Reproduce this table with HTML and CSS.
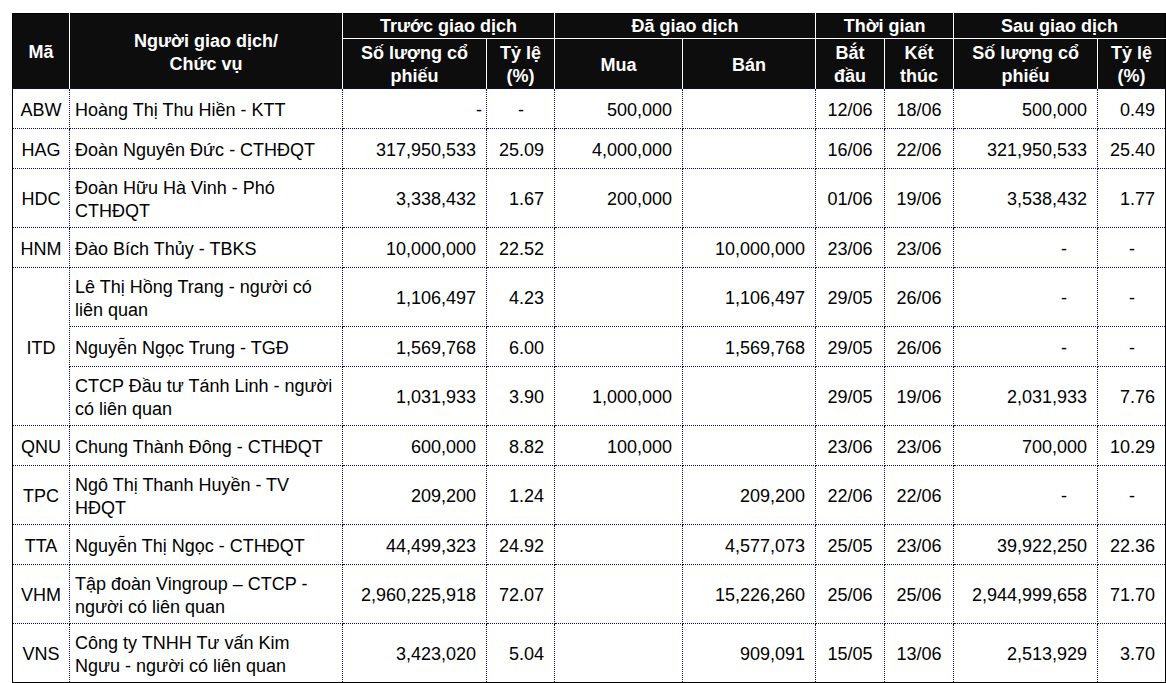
FILE: index.html
```html
<!DOCTYPE html>
<html lang="vi">
<head>
<meta charset="utf-8">
<title>Giao dịch cổ đông nội bộ</title>
<link rel="stylesheet" href="styles.css">
</head>
<body>
<div class="wrap">
<table class="trades">
  <colgroup>
    <col class="c-ma"><col class="c-name"><col class="c-sl"><col class="c-tl">
    <col class="c-mua"><col class="c-ban"><col class="c-date"><col class="c-date">
    <col class="c-sl"><col class="c-tl">
  </colgroup>
  <thead>
    <tr class="h1">
      <th rowspan="2" class="first span">Mã</th>
      <th rowspan="2" class="span">Người giao dịch/<br>Chức vụ</th>
      <th colspan="2">Trước giao dịch</th>
      <th colspan="2">Đã giao dịch</th>
      <th colspan="2">Thời gian</th>
      <th colspan="2" class="last">Sau giao dịch</th>
    </tr>
    <tr class="h2">
      <th>Số lượng cổ<br>phiếu</th>
      <th>Tỷ lệ<br>(%)</th>
      <th>Mua</th>
      <th>Bán</th>
      <th>Bắt<br>đầu</th>
      <th>Kết<br>thúc</th>
      <th>Số lượng cổ<br>phiếu</th>
      <th class="last">Tỷ lệ<br>(%)</th>
    </tr>
  </thead>
  <tbody>
    <tr class="s">
      <td class="ma">ABW</td><td class="name">Hoàng Thị Thu Hiền - KTT</td>
      <td class="num dash-near">-</td><td class="num dash">-</td>
      <td class="num">500,000</td><td class="num"></td>
      <td class="date">12/06</td><td class="date">18/06</td>
      <td class="num">500,000</td><td class="num">0.49</td>
    </tr>
    <tr class="s">
      <td class="ma">HAG</td><td class="name">Đoàn Nguyên Đức - CTHĐQT</td>
      <td class="num">317,950,533</td><td class="num">25.09</td>
      <td class="num">4,000,000</td><td class="num"></td>
      <td class="date">16/06</td><td class="date">22/06</td>
      <td class="num">321,950,533</td><td class="num">25.40</td>
    </tr>
    <tr class="d">
      <td class="ma">HDC</td><td class="name">Đoàn Hữu Hà Vinh - Phó<br>CTHĐQT</td>
      <td class="num">3,338,432</td><td class="num">1.67</td>
      <td class="num">200,000</td><td class="num"></td>
      <td class="date">01/06</td><td class="date">19/06</td>
      <td class="num">3,538,432</td><td class="num">1.77</td>
    </tr>
    <tr class="s">
      <td class="ma">HNM</td><td class="name">Đào Bích Thủy - TBKS</td>
      <td class="num">10,000,000</td><td class="num">22.52</td>
      <td class="num"></td><td class="num">10,000,000</td>
      <td class="date">23/06</td><td class="date">23/06</td>
      <td class="num dash">-</td><td class="num dash">-</td>
    </tr>
    <tr class="d">
      <td class="ma" rowspan="3">ITD</td><td class="name">Lê Thị Hồng Trang - người có<br>liên quan</td>
      <td class="num">1,106,497</td><td class="num">4.23</td>
      <td class="num"></td><td class="num">1,106,497</td>
      <td class="date">29/05</td><td class="date">26/06</td>
      <td class="num dash">-</td><td class="num dash">-</td>
    </tr>
    <tr class="s">
      <td class="name">Nguyễn Ngọc Trung - TGĐ</td>
      <td class="num">1,569,768</td><td class="num">6.00</td>
      <td class="num"></td><td class="num">1,569,768</td>
      <td class="date">29/05</td><td class="date">26/06</td>
      <td class="num dash">-</td><td class="num dash">-</td>
    </tr>
    <tr class="d">
      <td class="name">CTCP Đầu tư Tánh Linh - người<br>có liên quan</td>
      <td class="num">1,031,933</td><td class="num">3.90</td>
      <td class="num">1,000,000</td><td class="num"></td>
      <td class="date">29/05</td><td class="date">19/06</td>
      <td class="num">2,031,933</td><td class="num">7.76</td>
    </tr>
    <tr class="s">
      <td class="ma">QNU</td><td class="name">Chung Thành Đông - CTHĐQT</td>
      <td class="num">600,000</td><td class="num">8.82</td>
      <td class="num">100,000</td><td class="num"></td>
      <td class="date">23/06</td><td class="date">23/06</td>
      <td class="num">700,000</td><td class="num">10.29</td>
    </tr>
    <tr class="d">
      <td class="ma">TPC</td><td class="name">Ngô Thị Thanh Huyền - TV<br>HĐQT</td>
      <td class="num">209,200</td><td class="num">1.24</td>
      <td class="num"></td><td class="num">209,200</td>
      <td class="date">22/06</td><td class="date">22/06</td>
      <td class="num dash">-</td><td class="num dash">-</td>
    </tr>
    <tr class="s">
      <td class="ma">TTA</td><td class="name">Nguyễn Thị Ngọc - CTHĐQT</td>
      <td class="num">44,499,323</td><td class="num">24.92</td>
      <td class="num"></td><td class="num">4,577,073</td>
      <td class="date">25/05</td><td class="date">23/06</td>
      <td class="num">39,922,250</td><td class="num">22.36</td>
    </tr>
    <tr class="d">
      <td class="ma">VHM</td><td class="name">Tập đoàn Vingroup – CTCP -<br>người có liên quan</td>
      <td class="num">2,960,225,918</td><td class="num">72.07</td>
      <td class="num"></td><td class="num">15,226,260</td>
      <td class="date">25/06</td><td class="date">25/06</td>
      <td class="num">2,944,999,658</td><td class="num">71.70</td>
    </tr>
    <tr class="d">
      <td class="ma">VNS</td><td class="name">Công ty TNHH Tư vấn Kim<br>Ngưu - người có liên quan</td>
      <td class="num">3,423,020</td><td class="num">5.04</td>
      <td class="num"></td><td class="num">909,091</td>
      <td class="date">15/05</td><td class="date">13/06</td>
      <td class="num">2,513,929</td><td class="num">3.70</td>
    </tr>
  </tbody>
</table>
</div>
</body>
</html>
```

FILE: styles.css
```css
html, body {
  margin: 0;
  padding: 0;
  background: #ffffff;
}

.wrap {
  padding: 13px 0 0 12px;
}

.trades {
  border-collapse: collapse;
  table-layout: fixed;
  width: 1153px;
  border: 1px solid #000000;
  font-family: "Liberation Sans", Arial, sans-serif;
  font-size: 18px;
  line-height: 23px;
  color: #000000;
}

.c-ma { width: 57px; }
.c-name { width: 273px; }
.c-sl { width: 144px; }
.c-tl { width: 68px; }
.c-mua { width: 128px; }
.c-ban { width: 133px; }
.c-date { width: 69px; }

.trades th {
  background: #0d0d0d;
  color: #ffffff;
  font-weight: bold;
  text-align: center;
  vertical-align: middle;
  padding: 0 2px;
  border-left: 1px solid #ffffff;
  border-right: 1px solid #ffffff;
  border-top: none;
  border-bottom: none;
}

.trades th.first { border-left: none; }
.trades th.last { border-right: none; }
.trades th.span { padding-top: 3px; }

.trades .h1 th { height: 24px; }
.trades .h2 th {
  height: 46px;
  padding-top: 3px;
  border-top: 1px solid #ffffff;
}

.trades td {
  border: 1px dotted #0a0a78;
  padding: 3px 0 0 0;
  vertical-align: middle;
  white-space: nowrap;
}

.trades tr.s td { height: 36px; }
.trades tr.d td { height: 55px; }

.trades td.ma { text-align: center; }
.trades td.name { text-align: left; padding-left: 5px; }
.trades td.num { text-align: right; padding-right: 10px; }
.trades td.date { text-align: center; }
.trades td.dash { padding-right: 30px; }
.trades td.dash-near { padding-right: 4px; }
```
